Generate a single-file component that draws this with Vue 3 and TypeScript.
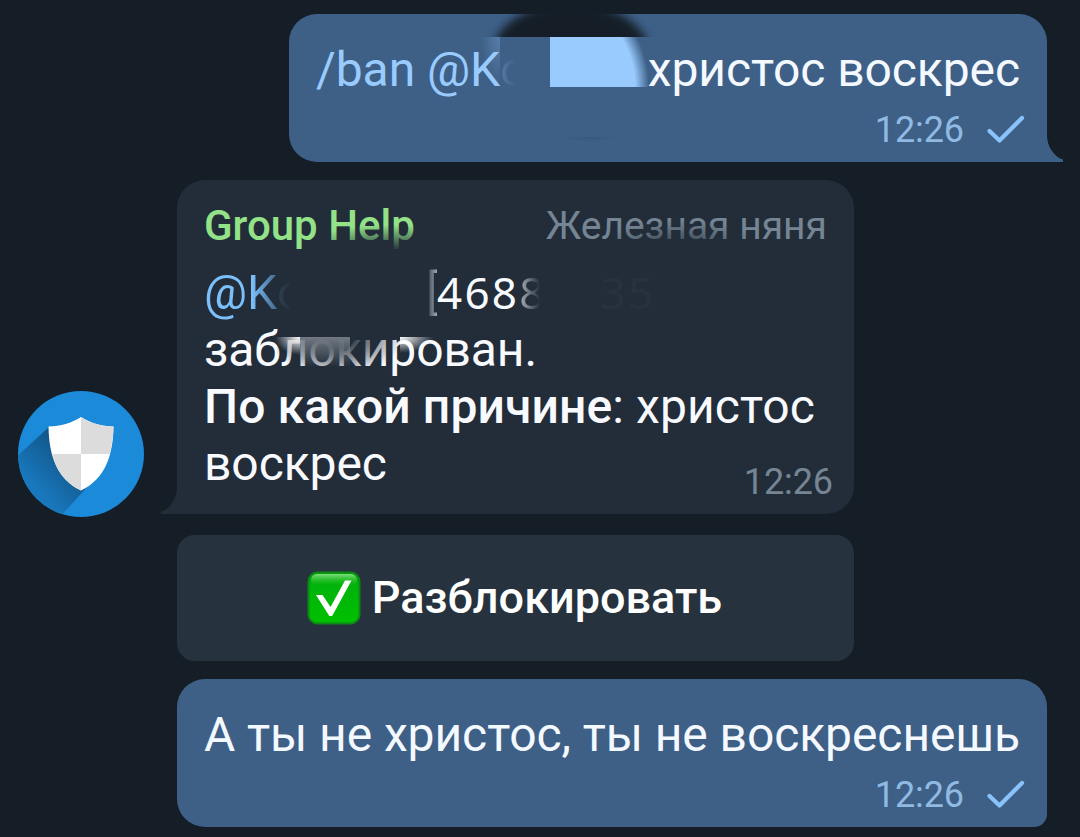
<template>
  <div class="chat">
    <div class="row out">
      <div class="bubble bubble-out first">
        <div class="smudge-top"><i></i></div>
        <p class="text command">
          <span class="link">/ban @K</span><span class="ghost">o</span><span class="smudge-name"></span><span>христос воскрес</span>
        </p>
        <div class="meta">
          <span>{{ time }}</span>
          <svg class="tick" viewBox="0 0 38 30"><path d="M2.5 16 L12.5 25.5 L35 3" /></svg>
        </div>
        <i class="smudge-glow"></i>
        <i class="smudge-bottom"></i>
        <svg class="tail tail-right" viewBox="0 0 18 36"><path d="M0 0 V36 H17 V33.500 C8 31 1 20 1 10 V0 Z" /></svg>
      </div>
    </div>

    <div class="row in">
      <svg class="avatar" viewBox="0 0 126 126">
        <defs>
          <linearGradient id="shadow" gradientUnits="userSpaceOnUse" x1="62" y1="62" x2="20" y2="100">
            <stop offset="0" stop-color="#10507f" />
            <stop offset="1" stop-color="#1978bd" />
          </linearGradient>
          <clipPath id="round"><circle cx="63" cy="63" r="63" /></clipPath>
        </defs>
        <circle cx="63" cy="63" r="63" fill="#1b8ad9" />
        <path clip-path="url(#round)" fill="url(#shadow)" d="M31 36 L-2 66 V126 H42 L70 95 Z" />
        <path fill="#fff" d="M63 26 C53 32 43 35.500 30.500 35.500 C31 65 39 88 63 99.500 C87 88 95 65 95.500 35.500 C83 35.500 73 32 63 26 Z" />
        <path fill="#dcdcdc" d="M63 26 C73 32 83 35.500 95.500 35.500 C95.300 45 94 55 91.500 63 H63 Z M63 63 V99.500 C46 91 38 79 34.500 63 Z" />
      </svg>

      <div class="stack">
        <div class="bubble bubble-in">
          <div class="head">
            <span class="name">Group Help</span>
            <span class="title">Железная няня</span>
          </div>
          <div class="text">
            <div class="line user">
              <span class="mention">@K</span><span class="ghost">o</span><span class="gap"></span><span class="bracket">[</span><span class="code">468</span><span class="code fade">8</span><span class="code ghost-id">35</span>
            </div>
            <div class="line">заблокирован.</div>
            <div class="line reason"><b>По какой причине</b>: христос</div>
            <div class="line">воскрес</div>
          </div>
          <span class="stamp">{{ time }}</span>
          <i class="veil veil-name"></i>
          <i class="veil veil-title"></i>
          <i class="veil veil-word"></i>
          <i class="smear smear-a"></i>
          <i class="smear smear-b"></i>
          <i class="smear smear-c"></i>
          <svg class="tail tail-left" viewBox="0 0 18 36"><path d="M18 0 V36 H1.500 Q-.5 35 1.500 33.500 C10 31 17 20 17 10 V0 Z" /></svg>
        </div>

        <button class="unban" type="button">
          <svg class="emoji" viewBox="0 0 54 54">
            <defs>
              <linearGradient id="green" x1="0" y1="0" x2="0" y2="1">
                <stop offset="0" stop-color="#00a80a" />
                <stop offset=".3" stop-color="#00b40a" />
                <stop offset="1" stop-color="#00c000" />
              </linearGradient>
              <linearGradient id="gloss" x1="0" y1="0" x2="0" y2="1">
                <stop offset="0" stop-color="#7fdc7f" />
                <stop offset="1" stop-color="#1fc41f" stop-opacity="0" />
              </linearGradient>
            </defs>
            <rect x="1.500" y="1.500" width="51" height="51" rx="9" fill="url(#green)" stroke="#0c8a14" stroke-width="2" />
            <rect x="4" y="3" width="46" height="12" rx="6" fill="url(#gloss)" />
            <path fill="#fff" d="M9 24 H15.500 L23.500 36 L38 9.500 H44.500 L25.200 45 H22.300 Z" />
          </svg>
          <span>Разблокировать</span>
        </button>
      </div>
    </div>

    <div class="row out">
      <div class="bubble bubble-out last">
        <p class="text">А ты не христос, ты не воскреснешь</p>
        <div class="meta">
          <span>{{ time }}</span>
          <svg class="tick" viewBox="0 0 38 30"><path d="M2.500 16 L12.500 25.500 L35 3" /></svg>
        </div>
      </div>
    </div>
  </div>
</template>

<script setup lang="ts">
import { ref } from 'vue';

const time = ref<string>('12:26');
</script>

<style>
body {
  margin: 0;
  background: #151e27;
}
</style>

<style scoped>
.chat {
  box-sizing: border-box;
  width: 1080px;
  height: 837px;
  padding: 14px 33px 10px 18px;
  display: flex;
  flex-direction: column;
  gap: 18px;
  background: #151e27;
  font-family: Roboto, 'Noto Sans', sans-serif;
  overflow: hidden;
}

.row {
  display: flex;
}

.row.out {
  justify-content: flex-end;
}

.row.in {
  gap: 33px;
}

.bubble {
  position: relative;
  box-sizing: border-box;
  border-radius: 28px;
}

.bubble-out {
  height: 148px;
  padding: 27px 22px 0 27px;
  background: #3e6087;
  color: #f4f9ff;
}

.first {
  width: 758px;
  border-bottom-right-radius: 0;
}

.last {
  width: 870px;
  border-bottom-right-radius: 13px;
}

.text {
  margin: 0;
  font-size: 48px;
  line-height: 57px;
  letter-spacing: -0.08px;
  white-space: nowrap;
}

.command {
  display: flex;
}

.link {
  color: #99cbff;
}

.ghost {
  width: 22px;
  background: linear-gradient(90deg, rgba(153, 203, 255, 0.25), rgba(153, 203, 255, 0) 70%);
  background-clip: text;
  color: transparent;
}

/* wiped part of the user name */
.smudge-name {
  width: 98px;
  height: 50px;
  margin: -4px 0 0 auto;
  background: radial-gradient(ellipse 99px 105px at 0 100%, #99cbff 86%, rgba(153, 203, 255, 0.5) 93%, rgba(153, 203, 255, 0));
}

.command > :last-child {
  margin-right: 5px;
}

.smudge-glow {
  position: absolute;
  left: 192px;
  top: 23px;
  width: 19px;
  height: 50px;
  background: radial-gradient(ellipse 19px 50px at 100% 0, rgba(153, 203, 255, 0.28), rgba(153, 203, 255, 0));
}

.smudge-top {
  position: absolute;
  left: 186px;
  top: -10px;
  width: 190px;
  height: 33px;
  overflow: hidden;
}

.smudge-top i {
  display: block;
  width: 156px;
  height: 100px;
  margin: -1px 0 0 18px;
  border-radius: 50%;
  background: #151e27;
  filter: blur(5px);
}

.smudge-bottom {
  position: absolute;
  left: 270px;
  top: 123px;
  width: 60px;
  height: 5px;
  background: radial-gradient(ellipse at 50% 0, #38577b, rgba(56, 87, 123, 0) 70%);
}

.meta {
  display: flex;
  justify-content: flex-end;
  align-items: center;
  gap: 23px;
  margin-top: 11px;
  font-size: 36px;
  line-height: 42px;
  letter-spacing: -0.1px;
  color: #91bae3;
}

.tick {
  width: 38px;
  height: 30px;
}

.tick path {
  fill: none;
  stroke: #8ac3fb;
  stroke-width: 4.2;
  stroke-linecap: round;
  stroke-linejoin: round;
}

.tail {
  position: absolute;
  bottom: 0;
  width: 18px;
  height: 36px;
}

.tail-right {
  right: -17px;
  fill: #3e6087;
}

.tail-left {
  left: -17px;
  fill: #222d39;
}

.avatar {
  width: 126px;
  height: 126px;
  margin-top: 211px;
}

.stack {
  display: flex;
  flex-direction: column;
  gap: 21px;
  width: 677px;
}

.bubble-in {
  height: 334px;
  padding: 21px 27px 0;
  border-bottom-left-radius: 0;
  background: #222d39;
  color: #f8faff;
}

.head {
  display: flex;
  justify-content: space-between;
  height: 50px;
  margin-bottom: 13px;
  font-size: 42px;
  line-height: 50px;
}

.name {
  font-weight: 500;
  color: #93e287;
}

.title {
  font-size: 39px;
  color: #758594;
}

.line {
  height: 57px;
}

.line b {
  font-weight: 500;
}

.reason {
  letter-spacing: 0.1px;
}

.user {
  display: flex;
}

.mention {
  background: linear-gradient(90deg, #7cc0fb 65%, #42688c);
  background-clip: text;
  color: transparent;
}

.user .ghost {
  background: linear-gradient(90deg, rgba(124, 192, 251, 0.15), rgba(124, 192, 251, 0) 70%);
  background-clip: text;
}

.gap {
  width: 127px;
}

.bracket {
  width: 11px;
  background: linear-gradient(90deg, #2b3642, #a3a9b0);
  background-clip: text;
  color: transparent;
}

.code {
  font-family: 'Noto Sans', sans-serif;
  font-size: 44px;
  letter-spacing: 2.2px;
}

.fade {
  background: linear-gradient(90deg, #b0b5bb, #222d39 75%);
  background-clip: text;
  color: transparent;
}

.ghost-id {
  margin-left: 54px;
  opacity: 0.025;
}

.stamp {
  position: absolute;
  right: 21px;
  bottom: 11px;
  font-size: 36px;
  line-height: 42px;
  letter-spacing: -0.1px;
  color: #758594;
}

.veil {
  position: absolute;
}

.veil-name {
  left: 112px;
  top: 42px;
  width: 160px;
  height: 30px;
  background: radial-gradient(ellipse at 63% 100%, rgba(34, 45, 57, 0.9) 10%, rgba(34, 45, 57, 0) 64%);
}

.veil-title {
  left: 430px;
  top: 38px;
  width: 160px;
  height: 28px;
  background: radial-gradient(ellipse at 45% 100%, rgba(34, 45, 57, 0.7) 5%, rgba(34, 45, 57, 0) 66%);
}

.veil-word {
  left: 100px;
  top: 157px;
  width: 125px;
  height: 38px;
  background: radial-gradient(ellipse at 47% 0, rgba(34, 45, 57, 0.9) 20%, rgba(34, 45, 57, 0) 72%);
}

.smear {
  position: absolute;
  top: 157px;
}

.smear-a {
  left: 98px;
  width: 25px;
  height: 18px;
  background: radial-gradient(ellipse at 100% 0, #fff, rgba(255, 255, 255, 0) 70%);
}

.smear-b {
  left: 123px;
  width: 50px;
  height: 30px;
  background: linear-gradient(rgba(140, 147, 156, 0.75), rgba(140, 147, 156, 0));
}

.smear-c {
  left: 223px;
  width: 34px;
  height: 16px;
  background: radial-gradient(ellipse at 0 0, #fff, rgba(255, 255, 255, 0) 70%);
}

.unban {
  display: flex;
  align-items: center;
  justify-content: center;
  gap: 11px;
  height: 126px;
  padding: 0 2px 0 0;
  border: none;
  border-radius: 18px;
  background: #26323e;
  color: #fff;
  font-family: inherit;
  font-size: 45px;
  font-weight: 500;
  line-height: 52px;
}

.emoji {
  width: 54px;
  height: 54px;
}
</style>
